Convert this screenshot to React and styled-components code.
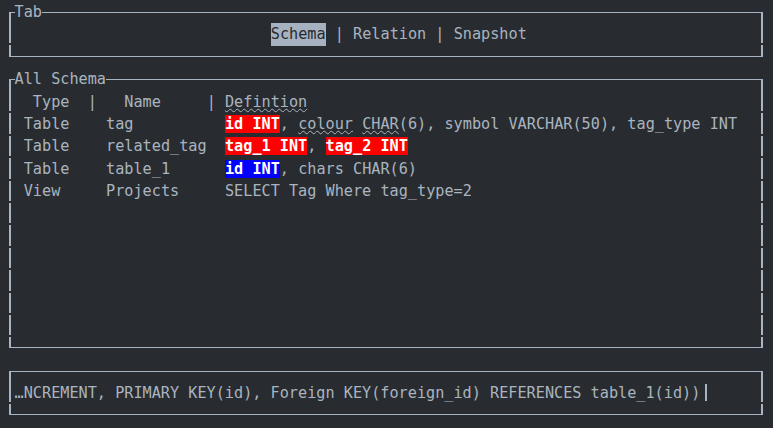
import { Fragment } from "react";
import styled, { createGlobalStyle } from "styled-components";

const W = 9.15;
const H = 22.4;
const LINE = "#a7b4c3";
const TEXT = "#aab4bf";
const BG = "#282c31";

const GlobalStyle = createGlobalStyle`
  html, body {
    margin: 0;
    padding: 0;
    background: ${BG};
  }
`;

const Screen = styled.div`
  box-sizing: border-box;
  width: 773px;
  height: 428px;
  overflow: hidden;
  padding: 1px 10px 0 9px;
  background: ${BG};
  color: ${TEXT};
  font-family: "DejaVu Sans Mono", "Liberation Mono", monospace;
  font-size: 15.2px;
  line-height: ${H}px;
  white-space: pre;
`;

const Panel = styled.section`
  display: flex;
  flex-direction: column;
`;

const Edge = styled.div`
  display: flex;
  height: ${H}px;
  align-items: ${(p) => (p.$bottom ? "flex-start" : "flex-end")};
`;

const Corner = styled.span`
  box-sizing: border-box;
  flex: none;
  width: ${W / 2 + 1}px;
  height: ${H / 2}px;
  border-${(p) => p.$side}: 2px solid ${LINE};
  border-${(p) => (p.$bottom ? "bottom" : "top")}: 1px solid ${LINE};
`;

const Rule = styled.span`
  box-sizing: border-box;
  flex: 1;
  height: ${H / 2}px;
  border-${(p) => (p.$bottom ? "bottom" : "top")}: 1px solid ${LINE};
`;

const Title = styled.span`
  align-self: stretch;
  line-height: ${H}px;
  color: ${TEXT};
`;

const sideLine = `repeating-linear-gradient(to bottom, ${LINE} 0px, ${LINE} ${H - 2}px, transparent ${H - 2}px, transparent ${H}px)`;

const Body = styled.div`
  box-sizing: border-box;
  height: ${(p) => p.$rows * H}px;
  padding: 0 ${W / 2 + 1}px;
  background: ${sideLine} left top / 2px 100% no-repeat,
    ${sideLine} right top / 2px 100% no-repeat;
`;

const Row = styled.div`
  display: flex;
  align-items: center;
  height: ${H}px;
  padding-left: ${(p) => (p.$indent || 0) * W}px;
`;

const Tab = styled.span`
  background: ${(p) => (p.$active ? "#a6b2c0" : "transparent")};
  color: ${(p) => (p.$active ? "#262a2f" : TEXT)};
`;

const Table = styled.div`
  display: grid;
  grid-template-columns: ${8 * W}px ${W}px ${12 * W}px ${W}px 1fr;
  grid-auto-rows: ${H}px;
`;

const Cell = styled.span`
  padding-left: ${(p) => (p.$pad || 0) * W}px;
  overflow: hidden;
`;

const Squiggle = styled.span`
  text-decoration: underline wavy ${TEXT};
  text-decoration-thickness: 1px;
  text-underline-offset: 1px;
`;

const Mark = styled.span`
  background: ${(p) => (p.$tone === "blue" ? "#0000ff" : "#ff0000")};
  color: #ffffff;
  font-weight: bold;
`;

const Cursor = styled.span`
  display: inline-block;
  width: 1.5px;
  height: 17px;
  margin-left: 5px;
  background: ${TEXT};
`;

function Box({ title, rows, children }) {
  return (
    <Panel>
      <Edge>
        <Corner $side="left" />
        {title && <Title>{title}</Title>}
        <Rule />
        <Corner $side="right" />
      </Edge>
      <Body $rows={rows}>{children}</Body>
      <Edge $bottom>
        <Corner $side="left" $bottom />
        <Rule $bottom />
        <Corner $side="right" $bottom />
      </Edge>
    </Panel>
  );
}

const schema = [
  {
    type: "Table",
    name: "tag",
    def: (
      <>
        <Mark>id INT</Mark>, <Squiggle>colour</Squiggle> <Squiggle>CHAR</Squiggle>
        (6), symbol VARCHAR(50), tag_type INT
      </>
    ),
  },
  {
    type: "Table",
    name: "related_tag",
    def: (
      <>
        <Mark>tag_1 INT</Mark>, <Mark>tag_2 INT</Mark>
      </>
    ),
  },
  {
    type: "Table",
    name: "table_1",
    def: (
      <>
        <Mark $tone="blue">id INT</Mark>, chars CHAR(6)
      </>
    ),
  },
  { type: "View", name: "Projects", def: "SELECT Tag Where tag_type=2" },
];

export default function App() {
  return (
    <>
      <GlobalStyle />
      <Screen>
        <Box title="Tab" rows={1}>
          <Row $indent={28}>
            <Tab $active>Schema</Tab>
            <Tab> | </Tab>
            <Tab>Relation</Tab>
            <Tab> | </Tab>
            <Tab>Snapshot</Tab>
          </Row>
        </Box>

        <Box title="All Schema" rows={11}>
          <Table>
            <Cell $pad={2}>Type</Cell>
            <Cell>|</Cell>
            <Cell $pad={3}>Name</Cell>
            <Cell>|</Cell>
            <Cell $pad={1}>
              <Squiggle>Defintion</Squiggle>
            </Cell>
            {schema.map((s) => (
              <Fragment key={s.name}>
                <Cell $pad={1}>{s.type}</Cell>
                <Cell />
                <Cell $pad={1}>{s.name}</Cell>
                <Cell />
                <Cell $pad={1}>{s.def}</Cell>
              </Fragment>
            ))}
          </Table>
        </Box>

        <Box rows={1}>
          <Row>
            …NCREMENT, PRIMARY KEY(id), Foreign KEY(foreign_id) REFERENCES table_1(id))
            <Cursor />
          </Row>
        </Box>
      </Screen>
    </>
  );
}
